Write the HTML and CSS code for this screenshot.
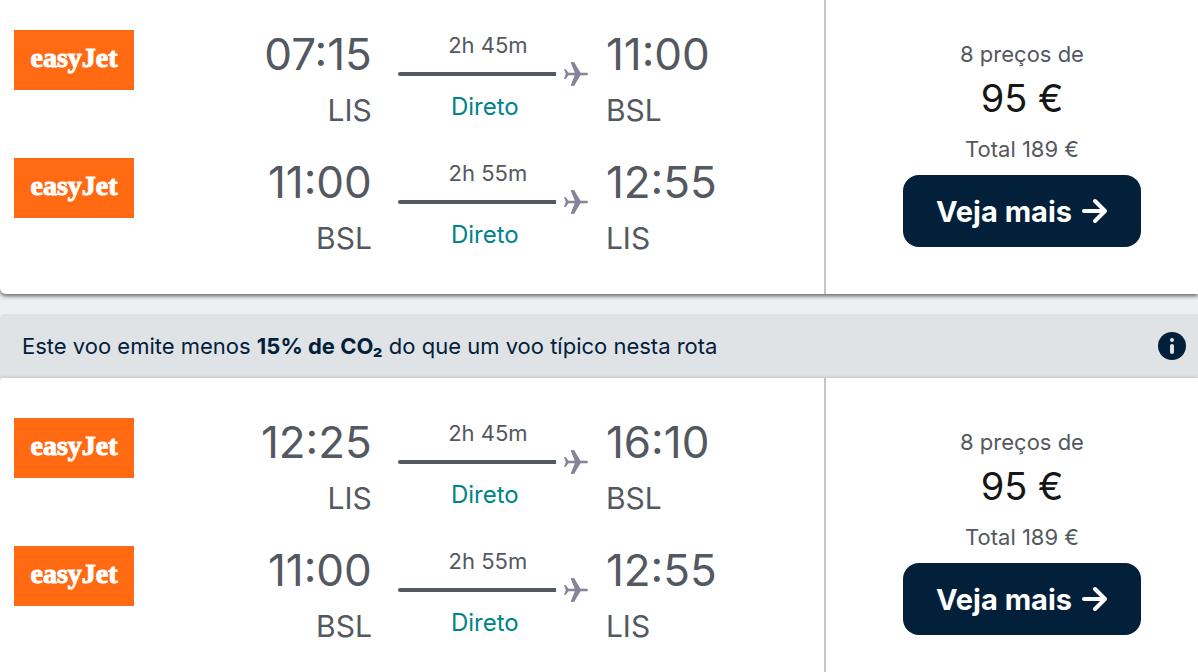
FILE: index.html
```html
<!DOCTYPE html>
<html lang="pt">
<head>
  <meta charset="UTF-8" />
  <title>Voos Lisboa – Basileia</title>
  <link rel="stylesheet" href="styles.css">
</head>
<body>

<svg class="sprite" aria-hidden="true">
  <symbol id="plane" viewBox="0 0 24 24">
    <path d="M0 7h1.500l3 3.700h6.300L7 1.300C6.700.6 7 0 7.700 0h1.600c.5 0 .9.2 1.200.7l6 10h6.200c1.700 0 1.700 2.600 0 2.600h-6.200l-6 10c-.3.500-.7.700-1.200.7H7.700c-.7 0-1-.6-.7-1.300l3.800-9.400H4.500l-3 3.700H0L1.800 12z" />
  </symbol>
  <symbol id="arrow" viewBox="0 0 26 26">
    <path d="M2 13h21M13 3l10 10-10 10" fill="none" stroke="currentColor" stroke-width="4" stroke-linecap="round" stroke-linejoin="round" />
  </symbol>
</svg>

<main class="results">
  <article class="ticket first">
    <div class="legs">
      <div class="leg">
        <div class="airline">easyJet</div>
        <div class="place departure"><span class="time">07:15</span><span class="code">LIS</span></div>
        <div class="route">
          <span class="duration">2h 45m</span>
          <div class="track"><span class="line"></span><svg class="plane"><use href="#plane" /></svg></div>
          <span class="stops">Direto</span>
        </div>
        <div class="place arrival"><span class="time">11:00</span><span class="code">BSL</span></div>
      </div>
      <div class="leg">
        <div class="airline">easyJet</div>
        <div class="place departure"><span class="time">11:00</span><span class="code">BSL</span></div>
        <div class="route">
          <span class="duration">2h 55m</span>
          <div class="track"><span class="line"></span><svg class="plane"><use href="#plane" /></svg></div>
          <span class="stops">Direto</span>
        </div>
        <div class="place arrival"><span class="time">12:55</span><span class="code">LIS</span></div>
      </div>
    </div>
    <div class="offer">
      <span class="note">8 preços de</span>
      <span class="price">95 €</span>
      <span class="note total">Total 189 €</span>
      <button class="more" type="button">Veja mais <svg class="arrow"><use href="#arrow" /></svg></button>
    </div>
  </article>

  <div class="eco">
    <p>Este voo emite menos <strong>15% de CO₂</strong> do que um voo típico nesta rota</p>
    <button class="info" type="button" aria-label="Mais informações">
      <svg viewBox="0 0 28 28">
        <circle cx="14" cy="14" r="14" fill="#02203a" />
        <circle cx="14" cy="8" r="2" fill="#dfe3e6" />
        <rect x="12" y="12" width="4" height="10" rx="2" fill="#dfe3e6" />
      </svg>
    </button>
  </div>

  <article class="ticket">
    <div class="legs">
      <div class="leg">
        <div class="airline">easyJet</div>
        <div class="place departure"><span class="time">12:25</span><span class="code">LIS</span></div>
        <div class="route">
          <span class="duration">2h 45m</span>
          <div class="track"><span class="line"></span><svg class="plane"><use href="#plane" /></svg></div>
          <span class="stops">Direto</span>
        </div>
        <div class="place arrival"><span class="time">16:10</span><span class="code">BSL</span></div>
      </div>
      <div class="leg">
        <div class="airline">easyJet</div>
        <div class="place departure"><span class="time">11:00</span><span class="code">BSL</span></div>
        <div class="route">
          <span class="duration">2h 55m</span>
          <div class="track"><span class="line"></span><svg class="plane"><use href="#plane" /></svg></div>
          <span class="stops">Direto</span>
        </div>
        <div class="place arrival"><span class="time">12:55</span><span class="code">LIS</span></div>
      </div>
    </div>
    <div class="offer">
      <span class="note">8 preços de</span>
      <span class="price">95 €</span>
      <span class="note total">Total 189 €</span>
      <button class="more" type="button">Veja mais <svg class="arrow"><use href="#arrow" /></svg></button>
    </div>
  </article>
</main>

</body>
</html>
```

FILE: styles.css
```css
* { box-sizing: border-box; }
body { margin: 0; background: #ecf0f1; color: #545860; font-family: Inter, "Liberation Sans", sans-serif; font-size: 22px; }
button { font-family: inherit; border: none; cursor: pointer; }
.sprite { display: none; }

.results { display: flex; flex-direction: column; min-height: 100vh; }
.ticket { display: flex; background: white; border-radius: 4px 0 0 0; flex-grow: 1; box-shadow: 0 0 4px rgba(0,0,0,0.2); }
.ticket.first { flex-grow: 0; margin-bottom: 20px; border-radius: 0 0 0 6px; box-shadow: 0 2px 4px rgba(0,0,0,0.6); }

.legs { flex: 1; padding: 40px 0 0 14px; }
.first .legs { padding: 30px 0 8px 14px; }
.leg { display: grid; grid-template-columns: 120px 19fr 190px 17fr; height: 128px; }
.airline { display: flex; align-items: center; justify-content: center; height: 60px; padding-bottom: 4px; background: #ff6a13; color: white;
           font-family: "Liberation Serif", serif; font-weight: bold; font-size: 28px; -webkit-text-stroke: 1px white; }
.place { display: flex; flex-direction: column; }
.departure { align-items: flex-end; padding-right: 26px; }
.arrival { padding-left: 18px; }
.time { font-size: 44px; line-height: 48px; }
.code { font-size: 30px; line-height: 36px; margin-top: 14px; }
.route { display: flex; flex-direction: column; line-height: 30px; }
.duration, .stops { width: 180px; text-align: center; }
.stops { color: #00838a; font-size: 24px; margin-top: 4px; padding-right: 6px; }
.track { display: flex; align-items: center; gap: 8px; height: 28px; }
.line { flex: 1; height: 4px; border-radius: 2px 0 0 2px; background: #545860; }
.plane { width: 24px; height: 24px; fill: #87819a; }

.offer { width: 374px; border-left: 2px solid #c1c7cb; padding: 50px 0 0 20px; display: flex; flex-direction: column; align-items: center; }
.first .offer { padding-top: 40px; }
.note { line-height: 28px; }
.price { color: #161616; font-size: 38px; line-height: 48px; margin-top: 6px; }
.total { margin-top: 13px; }
.more { display: flex; align-items: center; justify-content: center; gap: 10px; width: 238px; height: 72px; margin-top: 12px;
        border-radius: 16px; background: #02203a; color: white; font-size: 29px; font-weight: bold; }
.arrow { width: 26px; height: 26px; }

.eco { display: flex; align-items: center; justify-content: space-between; height: 64px; padding: 0 12px 0 22px;
       background: #dfe3e6; color: #02203a; border-radius: 4px 0 0 0; }
.eco p { margin: 0; }
.info { display: flex; width: 28px; height: 28px; padding: 0; background: none; }
```
